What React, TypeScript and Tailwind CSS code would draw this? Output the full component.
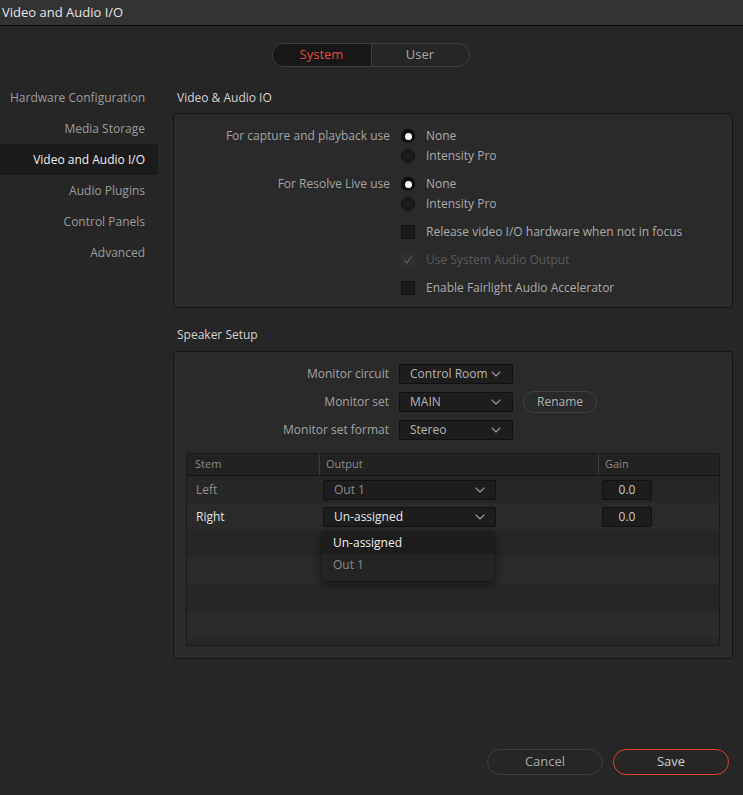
import type { ReactElement, ReactNode } from "react";

const sideItems = [
  "Hardware Configuration",
  "Media Storage",
  "Video and Audio I/O",
  "Audio Plugins",
  "Control Panels",
  "Advanced",
];

function Chevron(): ReactElement {
  return (
    <svg width="10" height="6" viewBox="0 0 10 6" fill="none" stroke="#9a9a9a" strokeWidth="1.1" strokeLinecap="round" strokeLinejoin="round">
      <polyline points="1,1 5,5 9,1" />
    </svg>
  );
}

function Radio({ checked }: { checked?: boolean }): ReactElement {
  return checked ? (
    <span className="flex h-[14px] w-[14px] items-center justify-center rounded-full bg-[#0c0c0c]">
      <span className="h-[7px] w-[7px] rounded-full bg-white" />
    </span>
  ) : (
    <span className="h-[14px] w-[14px] rounded-full border border-[#111111] bg-[#1c1c1c]" />
  );
}

function Checkbox({ checked, disabled }: { checked?: boolean; disabled?: boolean }): ReactElement {
  return (
    <span
      className={`flex h-[14px] w-[14px] items-center justify-center rounded-[2px] border ${
        disabled ? "border-[#333333] bg-[#2f2f2f]" : "border-[#121212] bg-[#1c1c1c]"
      }`}
    >
      {checked && (
        <svg width="10" height="10" viewBox="0 0 10 10" fill="none" stroke="#5c5c5c" strokeWidth="1.3" strokeLinecap="round" strokeLinejoin="round">
          <polyline points="1.5,5.5 4,8 8.5,1.5" />
        </svg>
      )}
    </span>
  );
}

function OptionRow({ label, control, text, muted, className = "" }: { label?: string; control: ReactNode; text: string; muted?: boolean; className?: string }): ReactElement {
  return (
    <div className={`flex h-[20px] items-center ${className}`}>
      <div className="w-[216px] text-right text-[12px] text-[#a3a3a3]">{label}</div>
      <div className="ml-[11px] flex items-center">{control}</div>
      <div className={`ml-[11px] text-[12px] ${muted ? "text-[#5a5a5a]" : "text-[#ababab]"}`}>{text}</div>
    </div>
  );
}

function Select({ value, width, bright }: { value: string; width: string; bright?: boolean }): ReactElement {
  return (
    <div className={`flex h-[20px] ${width} items-center justify-between rounded-[2px] border border-[#101010] bg-[#1d1d1d] pl-[10px] pr-[11px]`}>
      <span className={`text-[12px] ${bright ? "text-[#e6e6e6]" : "text-[#b5b5b5]"}`}>{value}</span>
      <Chevron />
    </div>
  );
}

function SetupRow({ label, children }: { label: string; children: ReactNode }): ReactElement {
  return (
    <div className="flex h-[20px] items-center">
      <div className="w-[215px] text-right text-[12px] text-[#a3a3a3]">{label}</div>
      <div className="ml-[10px] flex items-center gap-[10px]">{children}</div>
    </div>
  );
}

function TableRow({ stem, output, bright, shade }: { stem?: string; output?: string; bright?: boolean; shade: boolean }): ReactElement {
  return (
    <div className={`flex h-[27px] items-center ${shade ? "bg-[#2a2a2a]" : "bg-[#262626]"}`}>
      <div className={`w-[133px] pl-[9px] text-[12px] ${bright ? "text-[#e2e2e2]" : "text-[#8e8e8e]"}`}>{stem}</div>
      <div className="w-[279px] pl-[3px]">
        {output && (
          <div className="flex h-[20px] w-[173px] items-center justify-between rounded-[2px] border border-[#101010] bg-[#1d1d1d] pl-[10px] pr-[10px]">
            <span className={`text-[12px] ${bright ? "text-[#e6e6e6]" : "text-[#8e8e8e]"}`}>{output}</span>
            <Chevron />
          </div>
        )}
      </div>
      <div className="flex-1 pl-[3px]">
        {output && (
          <div className="flex h-[20px] w-[50px] items-center justify-center rounded-[2px] border border-[#101010] bg-[#1d1d1d] text-[12px] text-[#c8c8c8]">
            0.0
          </div>
        )}
      </div>
    </div>
  );
}

export default function App(): ReactElement {
  return (
    <div className="flex h-[795px] w-[743px] flex-col overflow-hidden bg-[#262626] font-['Open_Sans',sans-serif]">
      <header className="flex h-[26px] shrink-0 items-center border-b border-[#0a0a0a] bg-[#333333] pl-[2px]">
        <span className="text-[13px] font-medium text-[#e4e4e4]">Video and Audio I/O</span>
      </header>

      <div className="flex justify-center pt-[17px] pr-[2px]">
        <div className="flex h-[24px] w-[198px] overflow-hidden rounded-full border border-[#3f3f3f]">
          <div className="flex w-[99px] items-center justify-center border-r border-[#3f3f3f] bg-[#171717] text-[13px] text-[#e5473a]">System</div>
          <div className="flex flex-1 items-center justify-center text-[13px] text-[#a8a8a8]">User</div>
        </div>
      </div>

      <div className="mt-[15px] flex flex-1">
        <nav className="flex w-[158px] shrink-0 flex-col">
          {sideItems.map((item) => (
            <div
              key={item}
              className={`flex h-[31px] items-center justify-end pr-[13px] text-[12px] ${
                item === "Video and Audio I/O" ? "bg-[#1b1b1b] text-[#f0f0f0]" : "text-[#9c9c9c]"
              }`}
            >
              {item}
            </div>
          ))}
        </nav>

        <main className="flex flex-1 flex-col pl-[15px] pr-[10px]">
          <div className="flex h-[31px] items-center pl-[4px] text-[12px] text-[#d2d2d2]">Video &amp; Audio IO</div>
          <section className="flex flex-col rounded-[3px] border border-[#141414] bg-[#2a2a2a] pb-[9px] pt-[12px]">
            <OptionRow label="For capture and playback use" control={<Radio checked />} text="None" />
            <OptionRow control={<Radio />} text="Intensity Pro" />
            <OptionRow className="mt-[8px]" label="For Resolve Live use" control={<Radio checked />} text="None" />
            <OptionRow control={<Radio />} text="Intensity Pro" />
            <OptionRow className="mt-[8px]" control={<Checkbox />} text="Release video I/O hardware when not in focus" />
            <OptionRow className="mt-[8px]" control={<Checkbox checked disabled />} text="Use System Audio Output" muted />
            <OptionRow className="mt-[8px]" control={<Checkbox />} text="Enable Fairlight Audio Accelerator" />
          </section>

          <div className="mt-[11px] flex h-[32px] items-center pl-[4px] text-[12px] text-[#d2d2d2]">Speaker Setup</div>
          <section className="flex flex-col rounded-[3px] border border-[#141414] bg-[#2a2a2a] px-[12px] pb-[12px] pt-[12px]">
            <div className="-ml-[12px] flex flex-col gap-[8px]">
              <SetupRow label="Monitor circuit">
                <Select value="Control Room" width="w-[114px]" />
              </SetupRow>
              <SetupRow label="Monitor set">
                <Select value="MAIN" width="w-[114px]" />
                <button type="button" className="flex h-[22px] w-[74px] items-center justify-center rounded-full border border-[#3e3e3e] text-[12px] text-[#b0b0b0]">
                  Rename
                </button>
              </SetupRow>
              <SetupRow label="Monitor set format">
                <Select value="Stereo" width="w-[114px]" />
              </SetupRow>
            </div>

            <div className="relative mt-[13px] flex h-[193px] flex-col rounded-[2px] border border-[#1a1a1a] bg-[#262626]">
              <div className="flex h-[22px] items-center border-b border-[#131313] bg-[#222222] text-[11px] text-[#8a8a8a]">
                <div className="flex h-full w-[133px] items-center border-r border-[#3a3a3a] pl-[8px]">Stem</div>
                <div className="flex h-full w-[279px] items-center border-r border-[#3a3a3a] pl-[6px]">Output</div>
                <div className="flex h-full flex-1 items-center pl-[6px]">Gain</div>
              </div>
              <TableRow stem="Left" output="Out 1" shade={false} />
              <TableRow stem="Right" output="Un-assigned" bright shade />
              <TableRow shade={false} />
              <TableRow shade />
              <TableRow shade={false} />
              <TableRow shade />
              <div className="flex-1 bg-[#262626]" />

              <div className="absolute left-[135px] top-[78px] flex w-[172px] flex-col bg-[#242424] pb-[5px] shadow-[0_3px_8px_rgba(0,0,0,0.55)]">
                <div className="flex h-[22px] items-center bg-[#1c1c1c] pl-[11px] text-[12px] text-[#f0f0f0]">Un-assigned</div>
                <div className="flex h-[22px] items-center pl-[11px] text-[12px] text-[#8a8a8a]">Out 1</div>
              </div>
            </div>
          </section>
        </main>
      </div>

      <div className="flex justify-end gap-[10px] pb-[20px] pr-[14px]">
        <button type="button" className="flex h-[26px] w-[116px] items-center justify-center rounded-full border border-[#3e3e3e] text-[13px] text-[#a8a8a8]">
          Cancel
        </button>
        <button type="button" className="flex h-[26px] w-[116px] items-center justify-center rounded-full border border-[#e0432f] text-[13px] text-[#cfcfcf]">
          Save
        </button>
      </div>
    </div>
  );
}
